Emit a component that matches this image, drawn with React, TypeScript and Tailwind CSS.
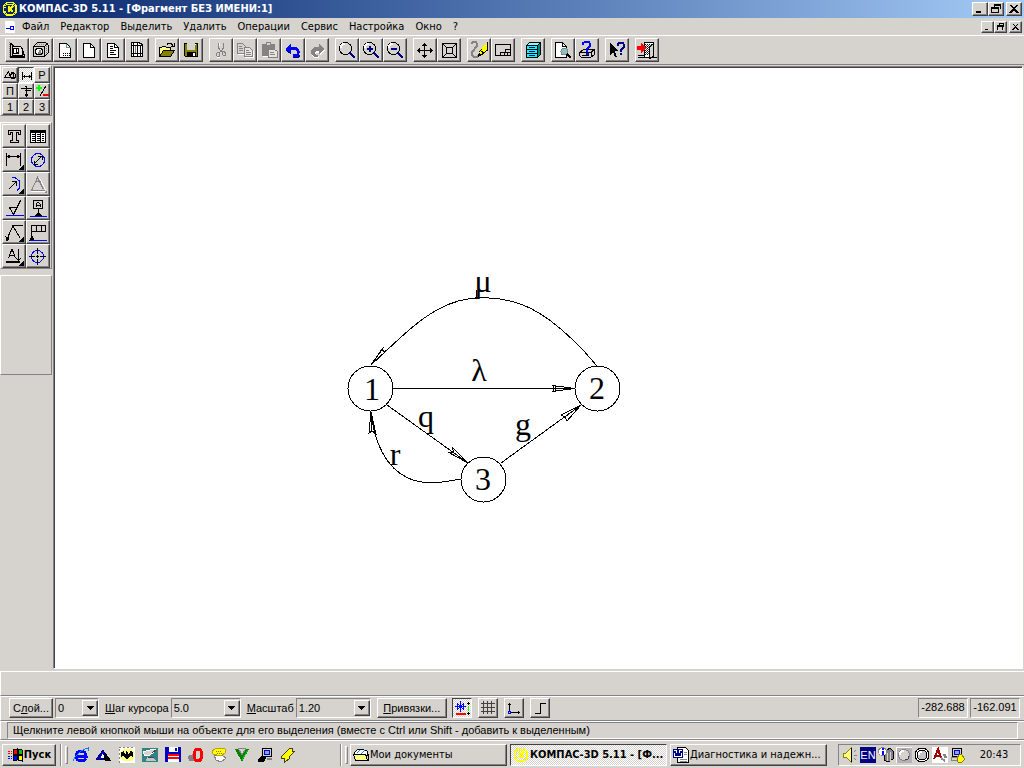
import React from 'react';
import { clsx } from 'clsx';

const raised =
  'border border-t-white border-l-white border-r-[#424142] border-b-[#424142] shadow-[inset_-1px_-1px_0_#848284]';
const sunken = 'border border-t-[#848284] border-l-[#848284] border-r-white border-b-white';
const panel = 'border border-t-white border-l-white border-r-[#848284] border-b-[#848284]';
const pressed =
  'border border-t-[#424142] border-l-[#424142] border-r-white border-b-white bg-[repeating-conic-gradient(#ffffff_0_25%,#d6d3ce_0_50%)] bg-[length:2px_2px]';
const sans = "font-['Liberation_Sans',Arial,sans-serif]";
const tahoma = "font-['DejaVu_Sans_Condensed','DejaVu_Sans',sans-serif]";

type Tool = { name: string; icon: React.ReactNode };

// Icons are drawn on a 24x24 pixel grid, the same as the button
function Icon({ box = '0 0 24 24', className, children }: { box?: string; className?: string; children: React.ReactNode }) {
  return (
    <svg
      viewBox={box}
      className={clsx('block shrink-0', className)}
      fill="none"
      stroke="#000"
      shapeRendering="crispEdges"
      aria-hidden="true"
    >
      {children}
    </svg>
  );
}

function Lens({ sign }: { sign?: string }) {
  return (
    <>
      <circle cx="10.5" cy="10.5" r="6" fill="#d6d3ce" />
      <path d="M6 10V8l2-2h2" stroke="#fff" strokeWidth="2" />
      <path d="M15 14l5 5M14 15l5 5" stroke="#848284" />
      <path d="M15 15l5 5" stroke="#000084" strokeWidth="2" />
      {sign && <path d={sign} stroke="#000084" strokeWidth="2" />}
    </>
  );
}

const page = 'M6.5 5.5h7l4 4v10h-11z';

const toolbar: Tool[][] = [
  [
    {
      name: 'Новый чертеж',
      icon: (
        <>
          <path d="M5.5 5v13.5h14M5.5 5l3 3" />
          <path d="M4 4v15" stroke="#848284" strokeDasharray="1 1" />
          <path d="M7.5 8.5h8l2 2v6.5h-10z" fill="#e7e3de" />
          <circle cx="11" cy="13" r="3" fill="#fff" />
          <path d="M11 11v3h2M16.5 9l3 9M5 19.5h15" />
        </>
      ),
    },
    {
      name: 'Новая деталь',
      icon: (
        <>
          <path d="M4.5 8.5l4-4h8l3 3v7l-4 4h-11z" fill="#d6d3ce" />
          <path d="M4.5 8.5h11v10M15.5 8.5l3-3" />
          <path d="M8 6.5h9M17.5 8v8" stroke="#848284" strokeDasharray="1 1" />
          <circle cx="10" cy="13.5" r="3.5" fill="#fff" />
          <path d="M10 12h2v4h-3z" fill="#848284" stroke="none" />
        </>
      ),
    },
    {
      name: 'Новый лист',
      icon: (
        <>
          <path d={page} fill="#fff" />
          <path d="M13.5 6v3.5h4" stroke="#848284" />
          <path d="M15 6.5h1M16 7.5h1" stroke="#00ffff" />
          <path d="M10 15.5h7M10 17.5h7" strokeDasharray="1 1" />
        </>
      ),
    },
    {
      name: 'Новый фрагмент',
      icon: (
        <>
          <path d={page} fill="#fff" />
          <path d="M13.5 5v4.5h4" />
        </>
      ),
    },
    {
      name: 'Новый текст',
      icon: (
        <>
          <path d={page} fill="#fff" />
          <path d="M13.5 5v4.5h4M9 8.5h3M9 10.5h3M9 12.5h6M9 14.5h4M9 16.5h6" />
          <path d="M15 6.5h1" stroke="#00ffff" />
        </>
      ),
    },
    {
      name: 'Новая спецификация',
      icon: (
        <>
          <path d="M6.5 4.5h7l4 2v12h-11z" fill="#fff" />
          <path d="M8.5 5v13M12.5 5v13M15.5 7v12M7 7.5h10M7 15.5h10" />
          <path d="M10.5 8v7" stroke="#848284" />
        </>
      ),
    },
  ],
  [
    {
      name: 'Открыть',
      icon: (
        <>
          <path d="M4.5 18.5v-9h2l1-1h3l1 1h4v3" fill="#ffff84" />
          <path d="M4.5 18.5l4-6h11l-4 6z" fill="#848200" />
          <path d="M12 6.5l1-1h3l2 2M19 5v3h-3" />
        </>
      ),
    },
    {
      name: 'Сохранить',
      icon: (
        <>
          <path d="M5.5 5.5h13v13h-12l-1-1z" fill="#848200" />
          <path d="M8 5h8v7H8z" fill="#d6d3ce" stroke="none" />
          <path d="M8 14h9v5H8z" fill="#000" stroke="none" />
          <path d="M14 15h2v3h-2zM16 6h1v1h-1z" fill="#fff" stroke="none" />
        </>
      ),
    },
  ],
  [
    {
      name: 'Вырезать',
      icon: (
        <g stroke="#848284">
          <path d="M9.5 5v5l3 4M14.5 5v5l-3 4" />
          <path d="M8.5 14.5h2v4h-2l-1-1v-2zM13.5 13.5h2l1 2v2h-2l-1-1z" />
          <path d="M10.5 5v3M11 19.5h-3" stroke="#fff" />
        </g>
      ),
    },
    {
      name: 'Копировать',
      icon: (
        <g stroke="#848284">
          <path d="M4.5 5.5h5l3 3v7h-8z" fill="#d6d3ce" />
          <path d="M6 8.5h3M6 10.5h4M6 12.5h4" />
          <path d="M11.5 9.5h5l3 3v6h-8z" fill="#e7e3de" />
          <path d="M13 12.5h3M13 14.5h5M13 16.5h5" />
          <path d="M5 16.5h6M12 19.5h8v-7" stroke="#fff" />
        </g>
      ),
    },
    {
      name: 'Вставить',
      icon: (
        <g stroke="#848284">
          <path d="M5.5 6.5h12v11h-12z" fill="#848284" />
          <path d="M9.5 4.5h4v3h-4z" fill="#d6d3ce" />
          <path d="M11.5 11.5h6l3 2v6h-9z" fill="#e7e3de" />
          <path d="M13 14.5h4M13 16.5h5" />
          <path d="M6 18.5h5" stroke="#fff" />
        </g>
      ),
    },
    {
      name: 'Отменить',
      icon: (
        <>
          <path d="M4 11l6-5v3h5l3 2 1 3-1 3-2 2h-4v-3h3l1-1v-2l-2-1h-4v4z" fill="#0000ff" stroke="none" />
          <path d="M5 12l5 4M12 19.5h5l2-2" stroke="#000084" />
        </>
      ),
    },
    {
      name: 'Повторить',
      icon: (
        <g stroke="none">
          <path d="M20 12l-5-4v3h-4l-3 2-1 3 1 3 2 1h4v-2h-3l-1-2 1-1h4v3z" fill="#fff" />
          <path d="M19 11l-5-5v3h-4l-4 3v3l2 3 2 1h3v-2h-2l-1-3 1-1h3v3z" fill="#848284" />
        </g>
      ),
    },
  ],
  [
    { name: 'Увеличить рамкой', icon: <Lens /> },
    { name: 'Увеличить', icon: <Lens sign="M8 11h6M11 8v6" /> },
    { name: 'Уменьшить', icon: <Lens sign="M8 11h6" /> },
  ],
  [
    {
      name: 'Сдвинуть',
      icon: (
        <>
          <path d="M4 12.5h16M11.5 5v15" />
          <path d="M9 7.5h5M10 6.5h3M9 17.5h5M10 18.5h3M6.5 10v5M5.5 11v3M17.5 10v5M18.5 11v3" />
        </>
      ),
    },
    {
      name: 'Показать все',
      icon: <path d="M5.5 5.5h14v14h-14zM9.5 9.5h6v6h-6zM5 5l4 4M20 5l-4 4M5 20l4-4M20 20l-4-4" />,
    },
  ],
  [
    {
      name: 'Обновить',
      icon: (
        <>
          <path d="M4 6l2-2h3l1 2v2l-5 6v3l2 2h3l3-3" stroke="#848284" strokeWidth="2" />
          <path d="M12 17l1-5 5-6 2-2v9l-4 4z" fill="#ffff00" stroke="none" />
          <path d="M20.5 4v8l-5 4-4 2 1-3M12.5 14l2-3M14 13l3 2" />
        </>
      ),
    },
    {
      name: 'Штамп',
      icon: <path d="M4.5 6.5h15v11h-15zM9.5 17v-2.5h10M14.5 14v-2.5h5M13.5 15v2M16.5 15v2" />,
    },
  ],
  [
    {
      name: 'Библиотеки',
      icon: (
        <>
          <path d="M5.5 7.5l3-3h11v12l-3 3h-11z" fill="#84ffff" />
          <path d="M16.5 7.5v12l3-3v-12z" fill="#008284" />
          <path d="M6 8h10v11H6z" fill="#00ffff" stroke="none" />
          <path d="M5 7.5h11M6 11.5h10M6 15.5h10M5.5 7v12h11" />
          <path d="M8 9.5h6M8 13.5h6M8 17.5h6" stroke="#000084" />
        </>
      ),
    },
  ],
  [
    {
      name: 'Предварительный просмотр',
      icon: (
        <>
          <path d="M4.5 4.5h7l4 4v11h-11z" fill="#fff" />
          <path d="M11.5 4v4.5h4" />
          <circle cx="13.5" cy="13.5" r="3.5" fill="#84c3c6" stroke="#848284" />
          <path d="M16 16l4 4" strokeWidth="2" />
        </>
      ),
    },
    {
      name: 'Печать',
      icon: (
        <>
          <path d="M4.5 14.5l4-3h11v5l-4 3h-9l-2-2z" fill="#d6d3ce" />
          <path d="M5 14.5h11l3-3M16 14v5M7 17.5h7" />
          <path d="M8 7V5l2-1h4l1 2v2l-3 3v3" stroke="#0000ff" strokeWidth="2" />
          <path d="M11 15h3v2h-3z" fill="#0000ff" stroke="none" />
        </>
      ),
    },
  ],
  [
    {
      name: 'Справка',
      icon: (
        <>
          <path d="M5 5v12l3-3 2 5h2l-2-6h4z" fill="#000" stroke="none" />
          <path d="M13 8V6l1-1h4l1 2v2l-3 3v2" stroke="#000084" strokeWidth="2" />
          <path d="M15 15h2v2h-2z" fill="#000084" stroke="none" />
        </>
      ),
    },
  ],
  [
    {
      name: 'Выход',
      icon: (
        <>
          <path d="M9.5 19V4.5h9v15" fill="#fff" />
          <path d="M10 6.5h8M10 8.5h8M10 10.5h8M10 12.5h8M10 14.5h8M10 16.5h5" strokeDasharray="1 1" />
          <path d="M11 7.5h7M11 9.5h7M11 11.5h7M11 13.5h7M11 15.5h4" stroke="#424142" strokeDasharray="1 1" />
          <path d="M14.5 20.5V9.5l4-4v13z" fill="#d6d3ce" />
          <path d="M3 17.5h6M3 19.5h11M19 19.5h3" />
          <path d="M2 8h4V5l5 5-5 5v-3H2z" fill="#ff0000" stroke="none" />
        </>
      ),
    },
  ],
];

// Flyout mark in the corner of a button
const corner = <path d="M21 18v3h-3z" fill="#000" />;

const sideTools: Tool[] = [
  { name: 'Ввод текста', icon: <path d="M6.5 6.5h12v4h-2v-2h-2v8h2v2h-8v-2h2v-8h-2v2h-2z" /> },
  {
    name: 'Ввод таблицы',
    icon: (
      <>
        <path d="M4.5 6.5h15v12h-15z" fill="#fff" />
        <path d="M4 7h16v2H4z" fill="#000" stroke="none" />
        <path d="M9.5 9v9M14.5 9v9" />
        <path d="M6 10.5h12M6 12.5h12M6 14.5h12M6 16.5h12" strokeDasharray="3 2" />
      </>
    ),
  },
  {
    name: 'Линейный размер',
    icon: (
      <>
        <path d="M4.5 5v13M18.5 5v13M5 8.5h13M6 7.5h2M6 9.5h2M15 7.5h2M15 9.5h2" />
        {corner}
      </>
    ),
  },
  {
    name: 'Диаметральный размер',
    icon: (
      <>
        <circle cx="12" cy="12" r="6.5" stroke="#0000ff" />
        <path d="M8 16l8-8M8.5 13v3h3M12 8.5h4v3" />
      </>
    ),
  },
  {
    name: 'Радиальный размер',
    icon: (
      <>
        <path d="M10 5.5h3l4 3 1 4-1 4-2 2" stroke="#0000ff" />
        <path d="M7 17l7-7M10 9.5h4v4" />
        {corner}
      </>
    ),
  },
  {
    name: 'Угловой размер',
    icon: (
      <>
        <path d="M5 19.5h14M13.5 6l6 12" stroke="#fff" />
        <path d="M5.5 18.5l6-13 6 12M5 18.5h14M9 9.5h6" stroke="#848284" />
        <path d="M21 18v3h-3z" fill="#848284" stroke="none" />
      </>
    ),
  },
  {
    name: 'Шероховатость',
    icon: (
      <>
        <path d="M7.5 11.5h8l-4 7-4-7M11.5 18.5l7-14" />
        <path d="M4 19.5h18" stroke="#0000ff" />
      </>
    ),
  },
  {
    name: 'База',
    icon: (
      <>
        <path d="M7.5 4.5h9v8h-9zM12 13v4M10 11V8l2-2 2 2v3M10 9.5h4" />
        <path d="M8 20l3-3h2l3 3z" fill="#000" stroke="none" />
        <path d="M4 20.5h17" stroke="#0000ff" />
      </>
    ),
  },
  {
    name: 'Линия-выноска',
    icon: (
      <>
        <path d="M5 19l6-13.5h10M11 6l7 12" />
        <path d="M4 17l3 1-2 3z" fill="#000" />
        {corner}
      </>
    ),
  },
  {
    name: 'Допуск формы',
    icon: (
      <>
        <path d="M5.5 19V5.5h14v6h-14M10.5 5v6M15.5 5v6" />
        <path d="M4 20l2-4 2 4z" fill="#000" />
        <path d="M4 20.5h17" stroke="#0000ff" />
      </>
    ),
  },
  {
    name: 'Линия разреза',
    icon: (
      <>
        <path d="M6.5 14l3.5-9 3.5 9M8 11.5h4M16.5 5v12M14.5 14l2 3 2-3" />
        <path d="M4 18h14" strokeWidth="2" />
        {corner}
      </>
    ),
  },
  {
    name: 'Обозначение центра',
    icon: (
      <>
        <circle cx="11.5" cy="12.5" r="6" stroke="#0000ff" />
        <path d="M11.5 4v6M11.5 15v6M3 12.5h6M14 12.5h6M10 12.5h3M11.5 11v3" />
      </>
    ),
  },
];

const modes: Tool[] = [
  {
    name: 'Геометрия',
    icon: (
      <Icon box="0 0 14 14" className="size-3.5">
        <path d="M1.5 9.5l4-6 2 6zM7.5 4.5h3v5h-3" />
        <circle cx="10" cy="8" r="2.5" />
      </Icon>
    ),
  },
  {
    name: 'Размеры',
    icon: (
      <Icon box="0 0 14 14" className="size-3.5">
        <path d="M3.5 4v8M12.5 4v8M4 8.5h8M5 7.5h1M5 9.5h1M10 7.5h1M10 9.5h1" />
      </Icon>
    ),
  },
  { name: 'Редактирование', icon: 'Р' },
  { name: 'Параметризация', icon: 'П' },
  {
    name: 'Измерения',
    icon: (
      <Icon box="0 0 14 14" className="size-3.5">
        <path d="M2 4.5h11M6 2.5h2M6 6.5h6M7.5 2v11M6 10.5h3M6 11.5h3" />
      </Icon>
    ),
  },
  {
    name: 'Выделение',
    icon: (
      <Icon box="0 0 14 14" className="size-3.5">
        <path d="M1 4h6M4 1v6" stroke="#00ff00" strokeWidth="2" />
        <path d="M5 12l6-10" />
        <path d="M8 11h6" stroke="#ff0000" strokeWidth="2" />
      </Icon>
    ),
  },
  { name: 'Набор 1', icon: '1' },
  { name: 'Набор 2', icon: '2' },
  { name: 'Набор 3', icon: '3' },
];

const quickLaunch: Tool[] = [
  {
    name: 'Internet Explorer',
    icon: (
      <>
        <path d="M3 9h10c0-3-2-5-5-5S3 6 3 9s2 5 5 5c2 0 4-1 5-2" stroke="#0000ff" strokeWidth="3" />
        <path d="M1 14C0 11 8 2 15 1v3" stroke="#0082ff" />
      </>
    ),
  },
  {
    name: 'Автор',
    icon: (
      <>
        <path d="M1 12h8V9L7 4z" fill="#fff" stroke="#000084" strokeWidth="2" />
        <path d="M9 6l5 7h-5l-1-3" fill="#000" />
        <path d="M3 12l5-8" stroke="#0000ff" />
      </>
    ),
  },
  {
    name: 'The Bat!',
    icon: (
      <>
        <path d="M0 0h16v16H0z" fill="#fff" stroke="#848284" strokeDasharray="2 2" />
        <path d="M4 2h8l3 3v6l-3 3H4l-3-3V5z" fill="#ffff84" stroke="none" />
        <path d="M2 5l3-1v2l2 1V4l1 1 1-1v3l2-1V4l3 1v5l-2-1-2 1-2 3-2-3-2-1-2 1z" fill="#000" stroke="none" />
      </>
    ),
  },
  {
    name: 'Рабочий стол',
    icon: (
      <>
        <path d="M0 1h16v14H0z" fill="#318284" stroke="none" />
        <path d="M1 5l10-3 3 1-6 5-5 1z" fill="#d6d3ce" stroke="#fff" />
        <path d="M5 10h6l3 4H4z" fill="#c6c3c6" stroke="none" />
        <path d="M6 10h6M10 6l4-3" stroke="#424142" />
      </>
    ),
  },
  {
    name: 'Дискета',
    icon: (
      <>
        <path d="M0 0h15l1 1v14H0z" fill="#0000c6" stroke="none" />
        <path d="M4 0h9v5H4zM3 8h11v7H3z" fill="#fff" stroke="none" />
        <path d="M10 1h2v3h-2z" fill="#0000c6" stroke="none" />
        <path d="M3 8h11M3 11h11" stroke="#ff0000" strokeWidth="2" />
      </>
    ),
  },
  {
    name: 'Opera',
    icon: (
      <>
        <path d="M0 9l5-2v7H1z" fill="#848284" stroke="none" />
        <path d="M1 13h6" stroke="#848284" strokeWidth="2" />
        <ellipse cx="10" cy="8" rx="4" ry="6" stroke="#ff0000" strokeWidth="3" />
      </>
    ),
  },
  {
    name: 'Телефон',
    icon: (
      <>
        <path d="M3 8l2 5 5 2 5-4-4-3z" fill="#fff" stroke="#848284" />
        <path d="M1 4l5-3 8 1v4l-4 3-8-2z" fill="#ffff00" stroke="#c6a200" />
        <path d="M5 4h5M6 6h5" stroke="#848200" strokeDasharray="1 1" />
      </>
    ),
  },
  {
    name: 'Загрузка',
    icon: (
      <>
        <path d="M1 2h14L8 15z" fill="#008200" stroke="none" />
        <path d="M4 1h8L8 8z" fill="#d6d3ce" stroke="#848284" />
        <path d="M14 3L8 13" stroke="#00c300" />
      </>
    ),
  },
  {
    name: 'Монитор',
    icon: (
      <>
        <path d="M5.5 1.5h9v8h-9z" fill="#d6d3ce" />
        <path d="M7.5 3.5h5v4h-5z" fill="#84a2ff" stroke="#0000c6" />
        <path d="M1 13l3-4h6l-3 6H1z" fill="#000" stroke="none" />
        <path d="M10 11.5h5" stroke="#848284" strokeWidth="2" />
      </>
    ),
  },
  {
    name: 'Winamp',
    icon: <path d="M1 10l9-9h2v3h3L9 10v2l-4 3H4v-4H1z" fill="#ffff00" stroke="#424100" />,
  },
];

const tray: Tool[] = [
  {
    name: 'Громкость',
    icon: (
      <>
        <path d="M1 6h3l5-5v14l-5-5H1z" fill="#ffff84" stroke="#848200" />
        <path d="M9.5 1v14" />
        <path d="M12 5l2-2M12 8h3M12 11l2 2" stroke="#848284" />
      </>
    ),
  },
  {
    name: 'Раскладка',
    icon: (
      <>
        <rect width="16" height="16" fill="#000084" stroke="none" />
        <text x="8" y="12" textAnchor="middle" fontSize="11" fill="#fff" stroke="none" fontFamily="Liberation Sans, sans-serif">
          EN
        </text>
      </>
    ),
  },
  {
    name: 'Сведения',
    icon: (
      <>
        <path d="M6 5l6-4 3 3v8l-5 3-4-2z" fill="#848284" />
        <path d="M9 6v8M12 5v9" stroke="#d6d3ce" />
        <circle cx="4.5" cy="4.5" r="4" fill="#fff" stroke="#848284" />
        <path d="M5 1v2M5 4v4" stroke="#0000ff" strokeWidth="2" />
      </>
    ),
  },
  {
    name: 'Индикатор',
    icon: (
      <>
        <rect width="16" height="16" fill="#b5b2b5" stroke="#fff" />
        <circle cx="8" cy="8" r="5.5" fill="#d6d3ce" stroke="#848284" />
        <path d="M4 8V6l2-2h2" stroke="#fff" strokeWidth="2" />
        <path d="M9 13l3-1 1-3" stroke="#424142" />
      </>
    ),
  },
  {
    name: 'Диск',
    icon: (
      <>
        <circle cx="8" cy="8" r="7" fill="#fff" />
        <circle cx="8" cy="8" r="5" fill="#c6c3c6" stroke="#000" />
        <path d="M5 8V6l2-1h1" stroke="#fff" strokeWidth="2" />
      </>
    ),
  },
  {
    name: 'Антивирус',
    icon: (
      <>
        <rect width="16" height="16" fill="#fff" stroke="none" />
        <path d="M2 12l4-10 3 9M4 9h5" stroke="#a50000" strokeWidth="2" />
        <path d="M11 8h2v2h2M9 11l4 3" stroke="#848284" strokeWidth="2" />
      </>
    ),
  },
  {
    name: 'Сеть',
    icon: (
      <>
        <path d="M2.5 1.5h9v8h-9z" fill="#d6d3ce" />
        <path d="M4 3h5v4H4z" fill="#84a2ff" stroke="#0000c6" />
        <path d="M1 10h10v3H1z" fill="#d6d3ce" stroke="#848284" />
        <path d="M7 11l3-4 2 1 3 4-3 3H8z" fill="#ffff00" stroke="#848200" />
      </>
    ),
  },
];

const menus = ['Файл', 'Редактор', 'Выделить', 'Удалить', 'Операции', 'Сервис', 'Настройка', 'Окно', '?'];

function Logo() {
  return (
    <Icon box="0 0 16 16" className="size-4">
      <g stroke="#ffff00">
        <circle cx="8" cy="8" r="7" />
        <path d="M3 5l2-2h6l2 2v6l-2 2H5l-2-2M1 6h3M1 10h3" />
        <path d="M7 5v6M11 5L8 8l3 3" strokeWidth="2" />
      </g>
    </Icon>
  );
}

const minimize = 'M2 8h5v2H2z';
const restore = 'M4 0h7v6H9v4H1V3h3zM5 2v1h4v2h1V2zM2 5v4h6V5z';
const close = 'M1 1h2l3 3 3-3h2L7 5l4 4v1H9L6 7l-3 3H1V9l4-4z';

function WindowButtons({ small }: { small?: boolean }) {
  const size = small ? 'h-3 w-[13px]' : 'h-3.5 w-4';
  const glyph = small ? 'h-2 w-[9px]' : 'h-2.5 w-3';
  const draw = (d: string) => (
    <Icon box="0 0 12 11" className={glyph}>
      <path d={d} fill="#000" fillRule="evenodd" stroke="none" />
    </Icon>
  );
  const base = clsx('flex items-center justify-center bg-[#d6d3ce]', raised, size);
  return (
    <div className="flex">
      <button className={base} aria-label="Свернуть">{draw(minimize)}</button>
      <button className={base} aria-label="Восстановить">{draw(restore)}</button>
      <button className={clsx(base, 'ml-0.5')} aria-label="Закрыть">{draw(close)}</button>
    </div>
  );
}

function Combo({ id, name, label, value, width }: { id: string; name: string; label?: boolean; value: string; width: string }) {
  return (
    <div className="flex items-center">
      {label && (
        <label htmlFor={id} className="pr-0.5">
          <u>{name[0]}</u>
          {name.slice(1)}
        </label>
      )}
      <div className={clsx('flex h-5 items-center', sunken, width)}>
        <select
          id={id}
          aria-label={name}
          defaultValue={value}
          className="h-4 min-w-0 flex-1 appearance-none bg-transparent pl-0.5 outline-none"
        >
          <option>{value}</option>
        </select>
        <span className={clsx('flex h-4 w-4 shrink-0 items-center justify-center', raised)}>
          <Icon box="0 0 7 4" className="h-1 w-[7px]">
            <path d="M0 0h7L4 4H3z" fill="#000" stroke="none" />
          </Icon>
        </span>
      </div>
    </div>
  );
}

function Diagram() {
  return (
    <svg className="block h-full w-full" fill="none" stroke="#000" role="img" aria-label="Граф состояний">
      <g transform="translate(-55 -68)" shapeRendering="crispEdges">
        <circle cx="370.5" cy="388.5" r="22.5" />
        <circle cx="597.5" cy="388.5" r="22.5" />
        <circle cx="483.5" cy="479.5" r="22.5" />

        {/* 2 -> 1 */}
        <path d="M597 366C588 355 560 323 530 308C500 294 464 294 437 310C415 322 395 343 371 365" />
        <path d="M371 365L382 349L384 352L387 350ZM371 365L384 347" />
        {/* 1 -> 2 */}
        <path d="M393 388.5H575M553.5 385V392M575 388.5L552 385.5H555V391.5H552Z" />
        {/* 1 -> 3 */}
        <path d="M387 405L468 463M468 463L452 447L454 453ZM468 463L448 452L454 453" />
        {/* 3 -> 2 */}
        <path d="M501 463L581 405M581 405L561 415L565 417ZM581 405L567 421L565 417" />
        {/* 3 -> 1 */}
        <path d="M461 479C445 482 425 486 408 478C386 468 374 442 371 412M371 412L369 433L372 431ZM371 412L376 434L372 431" />
        <path d="M476.5 290V298M475 297.5h3" />
      </g>
      <g
        transform="translate(-55 -68)"
        fill="#000"
        stroke="none"
        fontSize="32"
        textAnchor="middle"
        fontFamily="Liberation Serif, Times New Roman, serif"
      >
        <text x="372" y="400">1</text>
        <text x="597" y="399">2</text>
        <text x="483" y="490">3</text>
        <text x="483" y="292">μ</text>
        <text x="479" y="381">λ</text>
        <text x="426" y="427">q</text>
        <text x="523" y="435">g</text>
        <text x="395" y="465">r</text>
      </g>
    </svg>
  );
}

function TaskButton({ active, icon, children }: { active?: boolean; icon: React.ReactNode; children: React.ReactNode }) {
  return (
    <button
      className={clsx(
        'flex h-[22px] max-w-[157px] flex-1 items-center gap-px px-0.5 whitespace-nowrap',
        active ? clsx('font-bold', pressed) : raised,
      )}
    >
      {icon}
      <span>{children}</span>
    </button>
  );
}

function Grip() {
  return (
    <div className="flex h-[22px] gap-[3px]">
      <span className="w-0.5 border-r border-l border-l-[#848284] border-r-white" />
      <span className={clsx('my-0.5 w-[3px]', panel)} />
    </div>
  );
}

export default function App() {
  return (
    <div className={clsx('flex min-h-screen flex-col bg-[#d6d3ce] text-[11px] leading-[14px] text-black', sans)}>
      {/* Заголовок окна */}
      <header className="flex h-[18px] items-center bg-linear-to-r from-[#08246b] to-[#a5cbf7] px-0.5">
        <Logo />
        <h1 className={clsx('flex-1 truncate pl-px font-bold text-white', tahoma)}>
          КОМПАС-3D 5.11 - [Фрагмент БЕЗ ИМЕНИ:1]
        </h1>
        <WindowButtons />
      </header>

      {/* Меню */}
      <nav className={clsx('flex h-[18px] items-center border-b border-white pr-0.5 pl-[5px]', tahoma)}>
        <Icon box="0 0 10 12" className="h-3 w-2.5">
          <path d="M0 0h8l2 2v10H0z" fill="#fff" stroke="none" />
          <path d="M1 7.5h4M5.5 5.5h3v3h-3z" stroke="#0000ff" />
        </Icon>
        <div className="flex flex-1">
          {menus.map((m) => (
            <button key={m} className="pr-1 pl-[7px]">
              {m}
            </button>
          ))}
        </div>
        <WindowButtons small />
      </nav>

      {/* Панель управления */}
      <div className="flex h-[29px] items-center gap-1.5 border-b border-[#848284] pl-[5px]">
        {toolbar.map((group, i) => (
          <div key={i} className="flex">
            {group.map((t) => (
              <button key={t.name} aria-label={t.name} className={clsx('size-6', raised)}>
                <Icon box="1 1 22 22" className="size-[22px]">
                  {t.icon}
                </Icon>
              </button>
            ))}
          </div>
        ))}
      </div>

      <div className="flex flex-1">
        {/* Компактная панель */}
        <aside className="flex w-[52px] shrink-0 flex-col gap-1.5">
          <div className={clsx('grid grid-cols-[16px_16px_16px] pt-px pl-px', panel)}>
            {modes.map((m, i) => (
              <button
                key={m.name}
                aria-label={m.name}
                className={clsx('flex size-4 items-center justify-center', i === 1 ? pressed : raised)}
              >
                {m.icon}
              </button>
            ))}
          </div>
          <div className={clsx('grid grid-cols-[24px_24px] pt-px pl-px', panel)}>
            {sideTools.map((t) => (
              <button key={t.name} aria-label={t.name} className={clsx('size-6', raised)}>
                <Icon box="1 1 22 22" className="size-[22px]">
                  {t.icon}
                </Icon>
              </button>
            ))}
          </div>
          <div className={clsx('h-[100px]', panel)} />
        </aside>

        {/* Чертеж */}
        <main className={clsx('mt-px mr-px mb-0.5 ml-px flex-1', sunken)}>
          <div className="h-full border-t border-l border-[#424142] bg-white">
            <Diagram />
          </div>
        </main>
      </div>

      <div className="h-[25px] border-t border-b border-l border-t-white border-b-[#848284] border-l-white" />

      {/* Строка параметров */}
      <div className="flex h-[25px] items-start border-t border-b border-l border-t-white border-b-[#848284] border-l-white pt-px pr-1 pl-2">
        <button className={clsx('h-5 w-11', raised)}>
          С<u>л</u>ой...
        </button>
        <div className="flex gap-1.5 pl-0.5">
          <Combo id="layer" name="Слой" value="0" width="w-11" />
          <Combo id="step" label name="Шаг курсора" value="5.0" width="w-[70px]" />
          <Combo id="scale" label name="Масштаб" value="1.20" width="w-[75px]" />
          <button className={clsx('h-5 w-[70px]', raised)}>
            <u>П</u>ривязки...
          </button>
        </div>
        <div className="flex flex-1 gap-1.5 pl-[5px]">
          <button aria-label="Запретить привязки" className={clsx('size-5', pressed)}>
            <Icon box="0 0 18 18" className="size-[18px]">
              <path d="M7.5 2v11M2 7.5h11M4 4l7 7M11 4l-7 7M4.5 4v7M10.5 4v7" stroke="#0000ff" />
              <path d="M3 15h10" stroke="#ff0000" strokeWidth="2" />
              <path d="M15.5 3v3M14 4.5h3M15.5 13v3M14 14.5h3" />
              <path d="M15.5 7v5" stroke="#00ff00" />
            </Icon>
          </button>
          <button aria-label="Сетка" className={clsx('size-5', raised)}>
            <Icon box="0 0 18 18" className="size-[18px]">
              <path d="M4.5 2v13M8.5 2v13M12.5 2v13M2 4.5h14M2 8.5h14M2 12.5h14" stroke="#424142" />
            </Icon>
          </button>
          <button aria-label="Локальная СК" className={clsx('size-5', raised)}>
            <Icon box="0 0 18 18" className="size-[18px]">
              <path d="M4.5 4v8M3 5.5h3M6 13.5h9M13.5 12v3" />
              <path d="M3.5 12.5h2v2h-2z" stroke="#0000ff" />
            </Icon>
          </button>
          <button aria-label="Ортогональное черчение" className={clsx('size-5', raised)}>
            <Icon box="0 0 18 18" className="size-[18px]">
              <path d="M4 14.5h5.5v-10H15" />
            </Icon>
          </button>
        </div>
        <div className="flex gap-0.5">
          <output className={clsx('h-5 w-[50px] pt-px text-center', sunken)}>-282.688</output>
          <output className={clsx('h-5 w-[50px] pt-px text-center', sunken)}>-162.091</output>
        </div>
      </div>

      {/* Строка сообщений */}
      <div className="flex h-[19px] border-t border-b border-l border-t-white border-b-[#848284] border-l-white pr-1.5 pl-1.5">
        <p className={clsx('flex-1 truncate pl-[5px]', sunken)}>
          Щелкните левой кнопкой мыши на объекте для его выделения (вместе с Ctrl или Shift - добавить к выделенным)
        </p>
      </div>

      {/* Панель задач */}
      <footer className={clsx('flex h-7 items-end border-t border-white pr-[3px] pb-0.5 pl-0.5', tahoma)}>
        <button className={clsx('flex h-[22px] w-[54px] items-center justify-center gap-px font-bold', raised)}>
          <Icon box="0 0 16 16" className="size-4">
            <path d="M6 3l4-1v5l-4 1z" fill="#ff0000" />
            <path d="M11 2l4 1v5l-4-1z" fill="#00c300" />
            <path d="M6 9l4-1v5l-4 1z" fill="#0000ff" />
            <path d="M11 8l4 1v5l-4-1z" fill="#ffff00" />
            <path d="M1 4.5h4M1 6.5h4" stroke="#ff0000" strokeDasharray="2 1" />
            <path d="M1 9.5h4M1 11.5h4" stroke="#0000ff" strokeDasharray="2 1" />
          </Icon>
          Пуск
        </button>
        <div className="pl-1">
          <Grip />
        </div>
        <div className="flex h-[22px] items-center gap-[7px] pr-11 pl-[5px]">
          {quickLaunch.map((q) => (
            <button key={q.name} aria-label={q.name}>
              <Icon box="0 0 16 16" className="size-4">
                {q.icon}
              </Icon>
            </button>
          ))}
        </div>
        <Grip />
        <div className="flex flex-1 gap-[3px] pr-[11px] pl-0.5">
          <TaskButton
            icon={
              <Icon box="0 0 16 16" className="size-4">
                <path d="M1 6l3-3 4-1 6 2 1 4H1z" fill="#fff" />
                <path d="M4 6l3-3M8 7l4-4" stroke="#0082ff" />
                <path d="M.5 7.5h12l2 6h-12z" fill="#ffff84" />
                <path d="M15.5 7v7" />
              </Icon>
            }
          >
            Мои документы
          </TaskButton>
          <TaskButton active icon={<Logo />}>
            КОМПАС-3D 5.11 - [Ф...
          </TaskButton>
          <TaskButton
            icon={
              <Icon box="0 0 16 16" className="size-4">
                <path d="M4.5.5h8l3 3v12h-11z" fill="#fff" />
                <path d="M11 5.5h3M11 7.5h3M7 12.5h7M7 14.5h7" stroke="#848284" />
                <path d="M.5 2.5h9v8h-9z" fill="#fff" stroke="#000084" />
                <path d="M2 4l1 4h1l1-3 1 3h1l1-4" stroke="#000084" strokeWidth="2" />
              </Icon>
            }
          >
            Диагностика и надежн...
          </TaskButton>
        </div>
        <div className={clsx('flex h-[22px] w-[183px] items-center gap-0.5 pl-[3px]', sunken)}>
          {tray.map((t) => (
            <Icon key={t.name} box="0 0 16 16" className="size-4">
              {t.icon}
            </Icon>
          ))}
          <time className="flex-1 text-center">20:43</time>
        </div>
      </footer>
    </div>
  );
}
